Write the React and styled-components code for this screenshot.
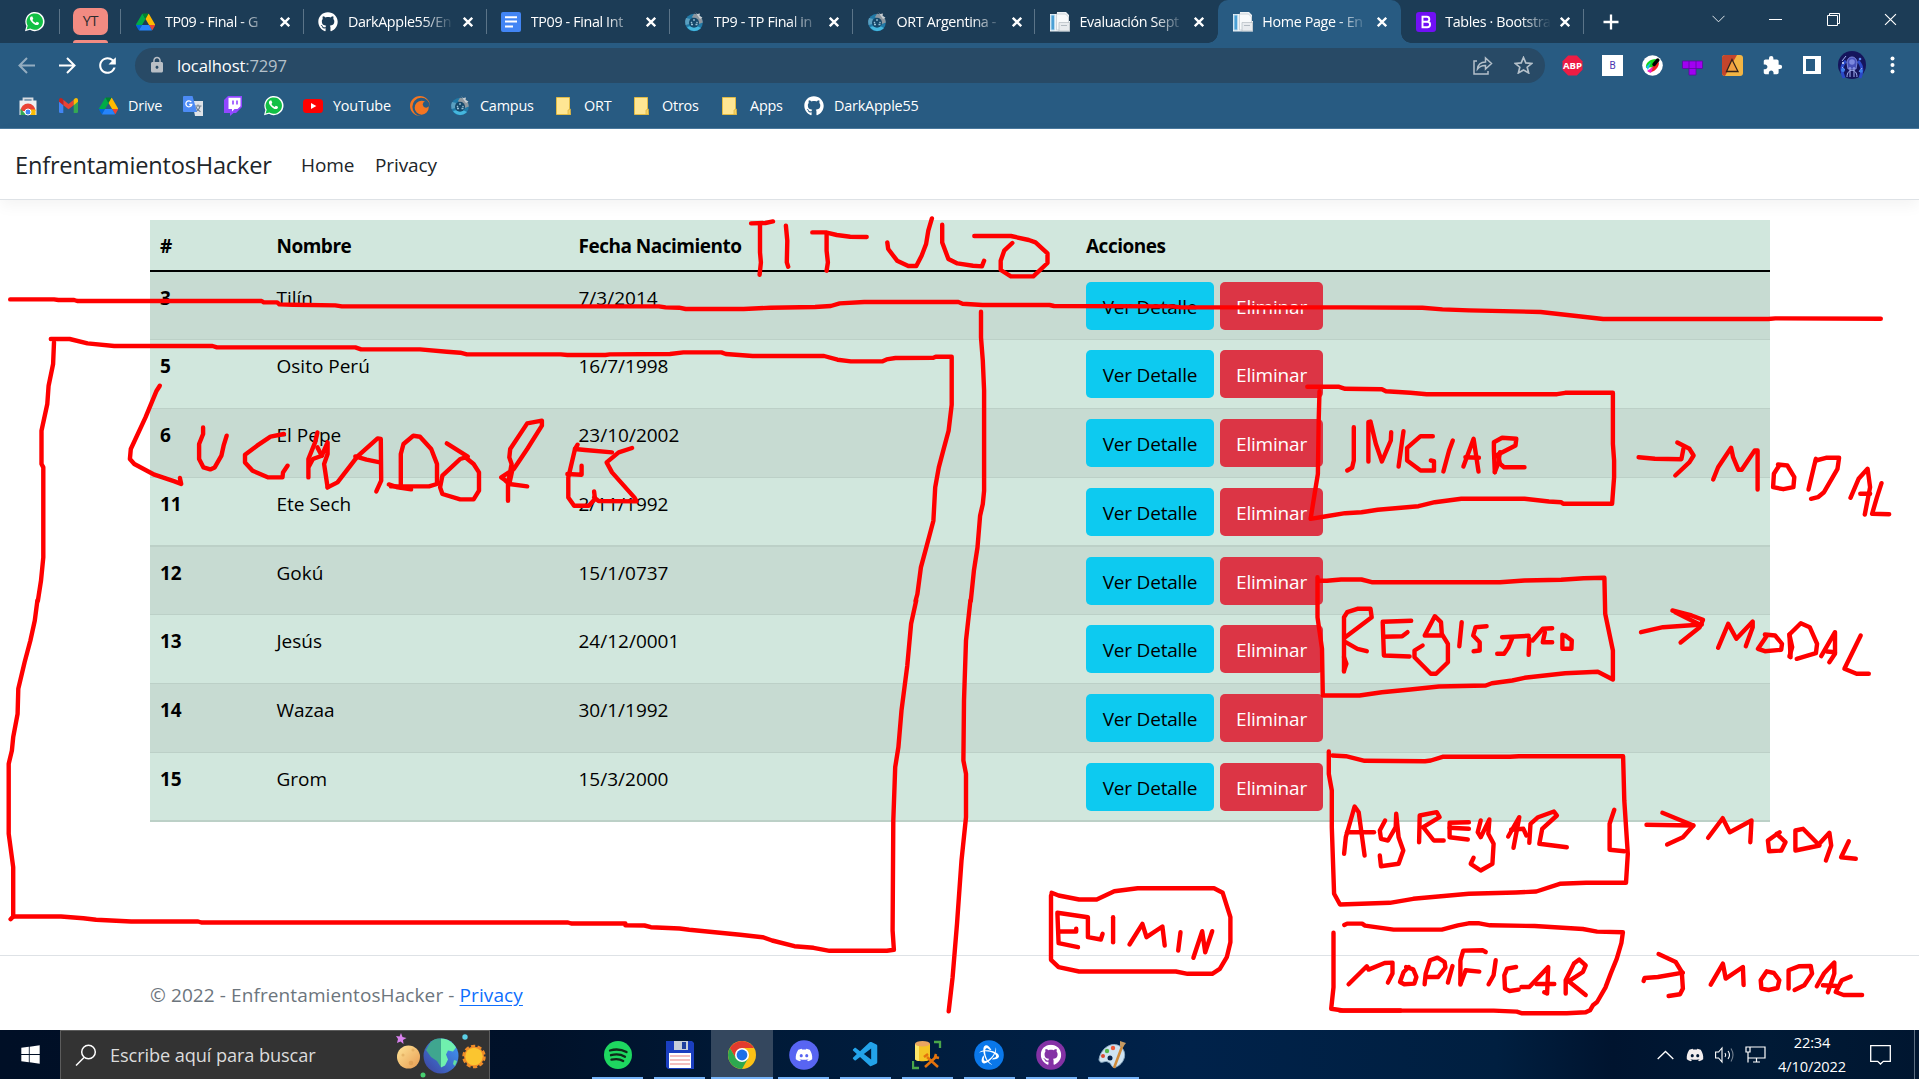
import React from 'react';
import styled, { createGlobalStyle } from 'styled-components';
import { FaGithub, FaDiscord, FaWindows } from 'react-icons/fa';
import { SiCrunchyroll, SiBattledotnet } from 'react-icons/si';
import { VscVscode } from 'react-icons/vsc';
import { MdExtension, MdRefresh, MdLock } from 'react-icons/md';

const Global = createGlobalStyle`
  * { box-sizing: border-box; }
  body { margin: 0; overflow: hidden; font-family: "Open Sans", "Noto Sans", sans-serif; }
  svg { display: block; flex: none; }
`;

const Screen = styled.div`
  position: relative;
  width: 1919px;
  height: 1079px;
  display: flex;
  flex-direction: column;
  background: #fff;
  overflow: hidden;
`;

/* ---------- browser ---------- */
const TabStrip = styled.div`
  height: 43px;
  display: flex;
  background: #1c3c56;
  color: #fff;
`;
const PinnedTab = styled.div`
  width: 60px;
  padding-left: 24px;
  display: flex;
  align-items: center;
  position: relative;
  &::after {
    content: '';
    position: absolute;
    right: 0;
    top: 9px;
    width: 1px;
    height: 25px;
    background: #5b7488;
  }
`;
const GroupTab = styled(PinnedTab)`
  width: 61px;
  padding: 8px 0 0 13px;
  flex-direction: column;
  align-items: flex-start;
  justify-content: space-between;
`;
const GroupChip = styled.span`
  width: 35px;
  height: 27px;
  border-radius: 7px;
  background: #f28b82;
  color: #2b2b2e;
  font-size: 14.5px;
  line-height: 26px;
  letter-spacing: -0.4px;
  text-align: center;
`;
const GroupLine = styled.span`
  width: 35px;
  height: 3px;
  border-radius: 3px 3px 0 0;
  background: #f28b82;
`;
const Tab = styled.div`
  position: relative;
  width: 182.9px;
  padding-left: 14.5px;
  display: flex;
  align-items: center;
  background: ${(p) => (p.$active ? '#285b82' : 'transparent')};
  border-radius: 10px 10px 0 0;
  &::after {
    content: '';
    display: ${(p) => (p.$active || p.$beforeActive ? 'none' : 'block')};
    position: absolute;
    right: 0;
    top: 9px;
    width: 1px;
    height: 25px;
    background: #5b7488;
  }
`;
const TabFoot = styled.span`
  position: absolute;
  bottom: 0;
  ${(p) => (p.$right ? 'left: 100%;' : 'right: 100%;')}
  width: 10px;
  height: 10px;
  background: radial-gradient(circle at ${(p) => (p.$right ? '100%' : '0')} 0, transparent 9.5px, #285b82 10px);
`;
const IconSlot = styled.span`
  width: ${(p) => p.$w || 20}px;
  flex: none;
  display: flex;
  justify-content: center;
`;
const TabLabel = styled.span`
  width: 107px;
  margin-left: 9.5px;
  white-space: nowrap;
  font-size: 14.3px;
  line-height: 22px;
  letter-spacing: -0.35px;
  mask-image: linear-gradient(90deg, #000 75px, transparent 106px);
`;
const TabClose = styled.span`
  width: 26px;
  display: flex;
  justify-content: center;
`;
const NewTab = styled.span`
  width: 54px;
  display: flex;
  align-items: center;
  justify-content: center;
`;
const WindowControls = styled.div`
  margin-left: auto;
  height: 38px;
  display: flex;
  align-items: center;
`;
const WindowButton = styled.span`
  width: 57.3px;
  display: flex;
  justify-content: center;
`;

const Toolbar = styled.div`
  height: 44px;
  padding: 0 6px 0 7px;
  display: flex;
  align-items: center;
  background: #285b82;
`;
const ToolButton = styled.span`
  width: 40px;
  height: 40px;
  flex: none;
  display: flex;
  align-items: center;
  justify-content: center;
  opacity: ${(p) => (p.$dim ? 0.5 : 1)};
`;
const Omnibox = styled.div`
  height: 35px;
  width: 1410px;
  margin: 0 7px 0 8px;
  padding: 0 2px 0 13px;
  border-radius: 18px;
  display: flex;
  align-items: center;
  background: #284a66;
  color: #b4c0ca;
`;
const Url = styled.span`
  margin-left: 11px;
  flex: 1;
  font-size: 16.6px;
  letter-spacing: -0.15px;
  b { color: #fff; font-weight: 400; }
`;

const Bookmarks = styled.div`
  height: 42px;
  padding: 0 8px 4px;
  display: flex;
  align-items: center;
  background: #285b82;
  border-bottom: 1px solid #4b7a9f;
  color: #fff;
`;
const Bookmark = styled.span`
  height: 30px;
  padding: 0 10px;
  display: flex;
  align-items: center;
`;
const BookmarkLabel = styled.span`
  width: ${(p) => p.$w}px;
  margin-left: 10px;
  font-size: 14.4px;
  letter-spacing: -0.2px;
  white-space: nowrap;
`;

/* ---------- page ---------- */
const Page = styled.div`
  flex: 1;
  display: flex;
  flex-direction: column;
  background: #fff;
  color: #212529;
  font-size: 19px;
`;
const Navbar = styled.header`
  height: 71px;
  padding: 1px 15px 0;
  display: flex;
  align-items: center;
  border-bottom: 1px solid #dee2e6;
  box-shadow: 0 5px 15px rgba(0, 0, 0, 0.05);
  white-space: nowrap;
`;
const Brand = styled.span`
  width: 286px;
  font-size: 23.6px;
  letter-spacing: -0.2px;
`;
const NavLink = styled.span`
  width: 74px;
  letter-spacing: -0.1px;
`;
const Main = styled.main`
  flex: 1;
  padding: 20px 149px 0 150px;
`;
const GridRow = styled.div`
  display: grid;
  grid-template-columns: 116.5px 302px 507.5px 1fr;
  width: 1620px;
  color: #000;
`;
const HeadRow = styled(GridRow)`
  height: 52px;
  background: #d1e7dd;
  border-bottom: 2px solid #000;
  font-weight: 700;
  letter-spacing: -0.5px;
`;
const BodyRow = styled(GridRow)`
  height: ${(p) => p.$h}px;
  background: ${(p) => (p.$striped ? '#c7dbd2' : '#d1e7dd')};
  border-bottom: ${(p) => p.$line}px solid #bcd0c7;
`;
const Cell = styled.div`
  padding: 11px 10px 0;
  line-height: 30px;
  letter-spacing: ${(p) => (p.$head ? -0.5 : 0)}px;
  font-weight: ${(p) => (p.$strong ? 700 : 'inherit')};
  white-space: nowrap;
`;
const Actions = styled(Cell)`
  padding-top: 10px;
  display: flex;
  gap: 6px;
`;
const Button = styled.span`
  width: ${(p) => p.$w}px;
  height: 47.5px;
  border-radius: 5px;
  text-align: center;
  line-height: 50px;
  letter-spacing: -0.2px;
  background: ${(p) => (p.$danger ? '#dc3545' : '#0dcaf0')};
  color: ${(p) => (p.$danger ? '#fff' : '#000')};
`;
const Footer = styled.footer`
  height: 75px;
  padding-left: 150px;
  border-top: 1px solid #dee2e6;
  line-height: 78px;
  color: #6c757d;
  letter-spacing: 0.1px;
  u { color: #0d6efd; text-underline-offset: 3px; }
`;

/* ---------- taskbar ---------- */
const Taskbar = styled.div`
  height: 49px;
  display: flex;
  background: linear-gradient(90deg, #000f26 0%, #001129 28%, #001a38 40%, #00224a 62%, #001f40 78%, #00142f 84%, #001a36 92%, #001630 100%);
  color: #fff;
`;
const Start = styled.span`
  width: 60px;
  display: flex;
  align-items: center;
  justify-content: center;
`;
const Search = styled.div`
  width: 430px;
  padding: 0 3px 0 14px;
  display: flex;
  align-items: center;
  background: #333;
  border: 1px solid #5c5c5c;
  border-bottom: 0;
  color: #dcdcdc;
  font-size: 18.2px;
`;
const SearchText = styled.span`
  margin-left: 13px;
  flex: 1;
  letter-spacing: -0.1px;
`;
const Apps = styled.div`
  margin-left: 97px;
  display: flex;
`;
const AppSlot = styled.span`
  width: 61.9px;
  display: flex;
  flex-direction: column;
  align-items: center;
  justify-content: space-between;
  padding-top: 10px;
  background: ${(p) => (p.$active ? '#34475e' : 'transparent')};
  &::after {
    content: '';
    width: ${(p) => (p.$active ? 62 : 51)}px;
    height: 2px;
    background: #76b3f8;
  }
`;
const Tray = styled.div`
  margin-left: auto;
  display: flex;
  align-items: center;
`;
const TrayItem = styled.span`
  width: 30px;
  display: flex;
  justify-content: center;
`;
const Clock = styled.span`
  width: 84px;
  text-align: center;
  font-size: 14.6px;
  line-height: 23.5px;
  letter-spacing: -0.1px;
`;
const Notify = styled.span`
  width: 52px;
  display: flex;
  justify-content: center;
`;
const DesktopEdge = styled.span`
  width: 5px;
  height: 49px;
  margin-left: 8px;
  border-left: 1px solid #5d6f82;
`;

const InkLayer = styled.svg`
  position: absolute;
  inset: 0;
  pointer-events: none;
`;

/* ---------- icons ---------- */
const Whatsapp = () => (
  <svg width="21" height="21" viewBox="0 0 21 21">
    <path d="M1 20.2 2.4 15A9.6 9.6 0 1 1 6 18.8Z" fill="#fff" />
    <path d="M2.6 18.6 3.7 14.8A8.2 8.2 0 1 1 6.3 17.5Z" fill="#12c045" />
    <path d="M7 5.4c-1.6.9-1.5 3 .7 5.500s5 4 6.700 2.600c.9-.8.6-1.700.1-2l-1.700-.8-1.200 1.200C10 11.300 8.900 10.200 8.400 9l.9-1.200-.9-2.200Z" fill="#fff" />
  </svg>
);
const Drive = () => (
  <svg width="19" height="18" viewBox="0 0 87 78">
    <path d="m6.600 67 3.900 6.600c.8 1.400 2 2.500 3.300 3.300L27.500 53H0c0 1.600.4 3.100 1.200 4.500z" fill="#0066da" />
    <path d="M43.700 25 29.900 1.200c-1.300.8-2.500 1.900-3.300 3.300l-25.400 44A9 9 0 0 0 0 53h27.500z" fill="#00ac47" />
    <path d="M73.500 76.800c1.400-.8 2.500-1.900 3.300-3.300l9.200-16c.9-1.400 1.200-3 1.200-4.500H59.800l5.900 11.500z" fill="#ea4335" />
    <path d="M43.700 25 57.400 1.200C56.100.4 54.500 0 52.900 0H34.400c-1.600 0-3.200.5-4.500 1.200z" fill="#00832d" />
    <path d="M59.800 53H27.500L13.700 76.800c1.400.8 2.900 1.200 4.500 1.200h50.800c1.600 0 3.200-.5 4.500-1.200z" fill="#2684fc" />
    <path d="m73.400 26.500-12.700-22c-.8-1.400-1.900-2.500-3.300-3.300L43.700 25l16.100 28h27.400c0-1.600-.4-3.100-1.200-4.500z" fill="#ffba00" />
  </svg>
);
const Docs = () => (
  <svg width="20" height="20" viewBox="0 0 20 20">
    <rect width="20" height="20" rx="2" fill="#4285f4" />
    <path d="M4 5.300h12M4 9.500h12M4 14.500h8" stroke="#fff" strokeWidth="2" />
  </svg>
);
const Campus = () => (
  <svg width="20" height="20" viewBox="0 0 20 20">
    <circle cx="10" cy="10.500" r="8.800" fill="#2179a6" />
    <path d="M10 1.700a8.800 8.800 0 0 1 8.800 8.800l-4 1.500L8 5Z" fill="#8d979f" />
    <path d="M11 0l2 2 3-.5-.5 2.500 3 1.500-2.500 1.500Z" fill="#c9ced2" />
    <path d="M3 15a8.800 8.800 0 0 0 14 1l-4-2-6 0Z" fill="#45b7de" />
    <path d="M2 6a9 9 0 0 0-.5 7l4-1 1-5Z" fill="#5a9fc0" />
    <circle cx="10" cy="10.800" r="5" fill="#16486a" />
    <path d="M10 7v2M7 12.500h2M11.500 12.500h2M8 10l-1 1M12.500 10l1 1" stroke="#9bc4d8" strokeWidth="1.300" />
  </svg>
);
const Pages = () => (
  <svg width="20" height="20" viewBox="0 0 20 20">
    <path d="M0 2h7V0h9l3 3v6h1v10.500H0Z" fill="#eef2f5" />
    <path d="M1 3h3.500v15H1Z" fill="#4ba0d5" stroke="#b6d9ee" />
    <path d="M6.500 2h9l3 3v13h-12Z" fill="#f8fafb" stroke="#c5cdd3" strokeWidth=".8" />
    <path d="M9 10.500h10.500v8.500H9Z" fill="#e8ebee" stroke="#b3bbc2" strokeWidth=".7" />
    <path d="M11 13.500h6" stroke="#b3bbc2" />
  </svg>
);
const BootstrapIcon = () => (
  <svg width="20" height="20" viewBox="0 0 20 20">
    <rect width="20" height="20" rx="3" fill="#7110f5" />
    <path d="M6.500 4.800h4.300a2.500 2.500 0 0 1 0 5H6.500Zm0 5h4.800a2.700 2.700 0 0 1 0 5.500H6.500Z" fill="none" stroke="#fff" strokeWidth="1.900" />
  </svg>
);
const Cross = ({ size = 10, weight = 2.300 }) => (
  <svg width={size} height={size} viewBox="0 0 10 10">
    <path d="m.8.8 8.400 8.400M9.200.8.8 9.200" stroke="#fff" strokeWidth={weight} />
  </svg>
);
const Arrow = ({ flip }) => (
  <svg width="18" height="17" viewBox="0 0 18 17" transform={flip ? 'scale(-1 1)' : undefined}>
    <path d="M1 8.500h15M9 1l7.500 7.500L9 16" fill="none" stroke="#fff" strokeWidth="2" />
  </svg>
);
const Share = () => (
  <svg width="20" height="19" viewBox="0 0 20 19">
    <path d="M4 5H1v13h14v-3M4.500 13c.5-4.500 3-7 8-7V2l6 5.500-6 5.500V9.500c-4-.2-6 1-8 3.500Z" fill="none" stroke="#b4c0ca" strokeWidth="1.500" />
  </svg>
);
const Star = () => (
  <svg width="19" height="18" viewBox="0 0 19 18">
    <path d="m9.500 1.500 2.300 5.400 5.900.5-4.500 3.800 1.400 5.700-5.100-3-5.100 3 1.400-5.700L1.300 7.400l5.900-.5Z" fill="none" stroke="#b4c0ca" strokeWidth="1.700" />
  </svg>
);
const Abp = () => (
  <svg width="21" height="21" viewBox="0 0 21 21">
    <path d="M6.200.5h8.600l5.700 5.700v8.600l-5.700 5.700H6.200L.5 14.800V6.200Z" fill="#ee1c44" />
    <text x="10.500" y="14" fontSize="9.600" fontWeight="700" fill="#fff" textAnchor="middle" fontFamily="Open Sans" textLength="19" lengthAdjust="spacingAndGlyphs">ABP</text>
  </svg>
);
const BExt = () => (
  <svg width="21" height="21" viewBox="0 0 21 21">
    <rect width="21" height="21" fill="#fff" />
    <text x="10.500" y="14" fontSize="10" fill="#4a35b0" textAnchor="middle" fontFamily="Roboto">B</text>
  </svg>
);
const ColorExt = () => (
  <svg width="21" height="21" viewBox="0 0 21 21">
    <circle cx="10.500" cy="10.500" r="10.300" fill="#fff" />
    <path d="M4 13C3 8 8 4 14 4l-3 8Z" fill="#12d61b" />
    <path d="m4 12 5-5-3 8Z" fill="#19bff0" />
    <path d="M6 17c6 1 11-4 11-10l-7 5Z" fill="#f01e1e" />
    <path d="m5 16 6-4-2 6Z" fill="#ef1bd0" />
    <path d="m12 9.500 3.800-4.500" stroke="#000" strokeWidth="3.500" strokeLinecap="round" />
  </svg>
);
const Tetris = () => (
  <svg width="21" height="21" viewBox="0 0 21 21">
    <path d="M.5 6h20v7.500H14V20H7v-6.500H.5Z" fill="#a100f2" />
    <path d="M7 6v7.500h7V6M.5 6h20v7.500H14V20H7v-6.500H.5Z" fill="none" stroke="#5a0a9c" strokeWidth=".8" />
  </svg>
);
const Triangle = () => (
  <svg width="21" height="21" viewBox="0 0 21 21">
    <rect width="21" height="21" rx="3" fill="#f2b544" />
    <path d="M0 3a3 3 0 0 1 3-3h12L3 21a3 3 0 0 1-3-3Z" fill="#c4452c" />
    <path d="m10 4.500 6 12H4.500Z" fill="#f0a040" stroke="#33221b" strokeWidth="1.300" />
  </svg>
);
const Avatar = () => (
  <svg width="28" height="28" viewBox="0 0 28 28">
    <circle cx="14" cy="14" r="14" fill="#15155c" />
    <path d="M6 27C3 20 3 14 8 10M22 27c3-7 2-13-2-17" stroke="#2a49c8" strokeWidth="3" fill="none" />
    <path d="M9 12c0-8 10-8 10 0l-1 6h-8Z" fill="#4650b8" stroke="#8f9bec" strokeWidth=".8" />
    <circle cx="14" cy="11" r="2.800" fill="#7c88de" />
    <path d="M9 26c0-9 10-9 10 0M12 16v10M16 16v10M4 16l3 3M24 17l-3 4M8 5l-4 5" stroke="#a6b4f4" strokeWidth="1" fill="none" />
    <circle cx="5" cy="19" r="2" fill="#3f7de8" /><circle cx="5" cy="12" r="1" fill="#d8e0ff" />
    <circle cx="22" cy="8" r="1.300" fill="#5c8df0" /><circle cx="23" cy="20" r="1.800" fill="#3f7de8" />
  </svg>
);
const Dots = () => (
  <svg width="5" height="18" viewBox="0 0 5 18" fill="#fff">
    <circle cx="2.500" cy="2.500" r="2" /><circle cx="2.500" cy="9" r="2" /><circle cx="2.500" cy="15.500" r="2" />
  </svg>
);
const SidePanel = () => (
  <svg width="18" height="18" viewBox="0 0 18 18"><path d="M0 0h18v18H0ZM3 3v12h9V3Z" fill="#fff" fillRule="evenodd" /></svg>
);
const Store = () => (
  <svg width="20" height="20" viewBox="0 0 20 20">
    <path d="M5.500 5V2.500h9V5" fill="none" stroke="#d8dce0" strokeWidth="1.800" />
    <path d="M1.500 4.500h17V19h-17Z" fill="#eceff1" />
    <path d="M2.500 15a7.500 7.500 0 0 1 15 0Z" fill="#ea4335" />
    <path d="M2.500 12.500 8 19H2.500Z" fill="#34a853" />
    <path d="M17.500 13.500V19H9l3-5.500Z" fill="#fbbc05" />
    <circle cx="10" cy="16" r="3" fill="#4285f4" stroke="#fff" />
  </svg>
);
const Gmail = () => (
  <svg width="19" height="15" viewBox="0 0 19 15">
    <path d="M0 2h4.300v13H1.300A1.300 1.300 0 0 1 0 13.700Z" fill="#4285f4" />
    <path d="M14.700 2H19v11.700a1.300 1.300 0 0 1-1.300 1.300h-3Z" fill="#34a853" />
    <path d="M4.300 1.800 9.500 6l5.200-4.200v5.400L9.500 11.300 4.300 7.200Z" fill="#ea4335" />
    <path d="M0 2.200C0 .3 2-.6 3.500.8l.8 1v5.400L0 3.800Z" fill="#c5221f" />
    <path d="M19 2.200c0-1.900-2-2.800-3.500-1.400l-.8 1v5.400L19 3.800Z" fill="#fbbc04" />
  </svg>
);
const Translate = () => (
  <svg width="20" height="20" viewBox="0 0 20 20">
    <path d="M9 5h11v15h-8Z" fill="#dfe3e8" />
    <path d="M11.500 10h7M15 8.500V10M17 10c-.5 3-2 4.500-4 5.500M13 11c.8 2.500 2.500 4 4.500 4.800" fill="none" stroke="#6f7f8e" strokeWidth="1.100" />
    <path d="M1 0h8.500L14 16H1a1 1 0 0 1-1-1V1a1 1 0 0 1 1-1Z" fill="#4c8bf5" />
    <path d="M8.300 6A3 3 0 1 0 8.800 8.500H6.200" fill="none" stroke="#fff" strokeWidth="1.300" />
  </svg>
);
const TwitchIcon = () => (
  <svg width="18" height="20" viewBox="0 0 18 20">
    <path d="M4 0h14v11l-6 6H9.500L6 20v-3H0V4Z" fill="#9147ff" />
    <path d="M4.500 1.700h12v8.500L13.500 13h-3L8 15.500V13H4.500Z" fill="#fff" />
    <path d="M9 4.500v4M13 4.500v4" stroke="#9147ff" strokeWidth="1.600" />
  </svg>
);
const Youtube = () => (
  <svg width="20" height="14" viewBox="0 0 20 14"><rect width="20" height="14" rx="3.500" fill="#f00" /><path d="m8 4 5.300 3L8 10Z" fill="#fff" /></svg>
);
const Folder = () => (
  <svg width="20" height="20" viewBox="0 0 20 20">
    <path d="M2.500 1.500h13v14l1 3h-14Z" fill="#ffe693" stroke="#e2bb45" />
    <path d="M14 18.500v-4.500l2.500-1v5.500Z" fill="#f6d264" stroke="#dbb13c" strokeWidth=".7" />
  </svg>
);
const Planets = () => (
  <svg width="90" height="46" viewBox="0 0 90 46">
    <defs>
      <linearGradient id="moon" x1="0" y1="0" x2="1" y2="1"><stop offset="0" stopColor="#ffe597" /><stop offset="1" stopColor="#e79c52" /></linearGradient>
      <linearGradient id="sea" x1="0" y1="1" x2="1" y2="0"><stop offset="0" stopColor="#3d3f9c" /><stop offset="1" stopColor="#3f9dfb" /></linearGradient>
    </defs>
    <path d="m5 1 1.500 4 4 1-3.500 2 .5 4-3-2.500L1 11l1-4-2-3 3.500.5Z" fill="#d982ee" />
    <circle cx="12.500" cy="25" r="11.500" fill="url(#moon)" />
    <circle cx="7" cy="23" r="1.500" fill="#dca659" opacity=".6" /><circle cx="15" cy="31" r="2.300" fill="#d99a4e" opacity=".6" /><circle cx="17" cy="18" r="1.500" fill="#dca659" opacity=".6" />
    <circle cx="45" cy="24" r="17.500" fill="url(#sea)" />
    <path d="M34 11c3-4 7-5 11-4.500v29L41 29l-6-4-5-7Z" fill="#3fa68f" />
    <path d="M45 6.500c7 0 12 4 15 9l-3 4-5-1-2 4 2 5-3 6-4 2Z" fill="#70f0ae" />
    <path d="m58 28 3 1-2 5-2-2Z" fill="#62dfa0" />
    <circle cx="78" cy="24.500" r="10" fill="#ef8c28" stroke="#ef8c28" strokeWidth="3.500" strokeDasharray="4 2.280" />
    <circle cx="78" cy="24.500" r="8.700" fill="#fbc52f" />
    <circle cx="69" cy="5" r="2.700" fill="#5bcfe6" /><circle cx="27" cy="43" r="2.500" fill="#47cf70" />
  </svg>
);
const Disk = ({ color, children }) => (
  <svg width="30" height="30" viewBox="0 0 30 30"><circle cx="15" cy="15" r="14.800" fill={color} />{children}</svg>
);
const Spotify = () => (
  <svg width="28" height="30" viewBox="0 0 28 30">
    <circle cx="14" cy="15" r="14" fill="#1ed760" />
    <path d="M6 10.500c6-1.800 11.500-1.200 16.500 1.600M7 15.200c5-1.400 9.800-1 14 1.500M7.500 19.700c4.500-1.200 8.300-.8 11.700 1.300" fill="none" stroke="#10281a" strokeWidth="2.300" strokeLinecap="round" />
  </svg>
);
const Floppy = () => (
  <svg width="28" height="30" viewBox="0 0 28 30">
    <path d="M0 1h26l2 2v26H2l-2-2Z" fill="#1b3fc0" />
    <path d="M8 1h14v9H8Z" fill="#c8d0da" /><path d="M16 2h4v7h-4Z" fill="#20419f" />
    <path d="M3 13h22v15H3Z" fill="#fff" /><path d="M4 16h20M4 20h20M4 24h20" stroke="#efabab" strokeWidth="1.500" />
  </svg>
);
const Chrome = () => (
  <svg width="28" height="30" viewBox="-14 -15 28 30">
    <circle r="14" fill="#fbc116" />
    <path d="M0-7H12.120A14 14 0 0 0-12.120-7L-6 3.500Z" fill="#e33b2e" />
    <path d="M-12.120-7A14 14 0 0 0 0 14L6 3.500 0 5-6 3.500Z" fill="#2da94f" />
    <circle r="7" fill="#fff" /><circle r="5.400" fill="#1f70e8" />
  </svg>
);
const Sql = () => (
  <svg width="30" height="30" viewBox="0 0 30 30">
    <path d="M3 4v15c0 3 15 3 15 0V4Z" fill="#f4c524" /><path d="M3 4v15c0 1 3 2 4 2V4Z" fill="#fde66a" />
    <ellipse cx="10.500" cy="3.800" rx="7.500" ry="2.800" fill="#e9a561" />
    <path d="M22 2h6v6M1 21v7h6" fill="none" stroke="#4aa64a" strokeWidth="2.300" />
    <path d="m15 17 11 10M25 16 13 27M12 17l4-3M24 14l-1 3 4 1" fill="none" stroke="#e4730d" strokeWidth="2.500" />
  </svg>
);
const Paint = () => (
  <svg width="30" height="30" viewBox="0 0 30 30">
    <path d="M1 20C2 9 14 0 23 7c7 6 3 17-5 20-5 2-4-4-8-5-4-2-7 3-9-2Z" fill="#cfe3f1" stroke="#8faec6" />
    <circle cx="5" cy="16" r="2" fill="#d94b33" /><circle cx="9" cy="11" r="2.200" fill="#55b84a" /><circle cx="15" cy="8" r="2.200" fill="#ee5b3a" />
    <circle cx="12" cy="18" r="2.500" fill="#06224a" />
    <path d="m25 4-9 24" stroke="#d08b3a" strokeWidth="2.500" /><path d="m22 1 6 2-3 4-3-1Z" fill="#c49a63" />
  </svg>
);

/* ---------- data ---------- */
const tabs = [
  { icon: <Drive />, label: 'TP09 - Final - G' },
  { icon: <FaGithub size={20} />, label: 'DarkApple55/En' },
  { icon: <Docs />, label: 'TP09 - Final Int' },
  { icon: <Campus />, label: 'TP9 - TP Final in' },
  { icon: <Campus />, label: 'ORT Argentina -' },
  { icon: <Pages />, label: 'Evaluación Sept', beforeActive: true },
  { icon: <Pages />, label: 'Home Page - En', active: true },
  { icon: <BootstrapIcon />, label: 'Tables · Bootstra' },
];

const bookmarks = [
  { icon: <Store /> },
  { icon: <Gmail /> },
  { icon: <Drive />, label: 'Drive', w: 35 },
  { icon: <Translate /> },
  { icon: <TwitchIcon /> },
  { icon: <Whatsapp /> },
  { icon: <Youtube />, label: 'YouTube', w: 57 },
  { icon: <SiCrunchyroll size={20} color="#f47521" /> },
  { icon: <Campus />, label: 'Campus', w: 54 },
  { icon: <Folder />, label: 'ORT', w: 28 },
  { icon: <Folder />, label: 'Otros', w: 38 },
  { icon: <Folder />, label: 'Apps', w: 34 },
  { icon: <FaGithub size={20} />, label: 'DarkApple55', w: 90 },
];

const fighters = [
  [3, 'Tilín', '7/3/2014', 68, 1],
  [5, 'Osito Perú', '16/7/1998', 69, 1],
  [6, 'El Pepe', '23/10/2002', 69, 1],
  [11, 'Ete Sech', '2/11/1992', 69, 2],
  [12, 'Gokú', '15/1/0737', 68, 1],
  [13, 'Jesús', '24/12/0001', 69, 1],
  [14, 'Wazaa', '30/1/1992', 69, 1],
  [15, 'Grom', '15/3/2000', 69, 2],
];

const apps = [
  <Spotify />,
  <Floppy />,
  <Chrome />,
  <Disk color="#5865f2"><FaDiscord x="6" y="6" size={18} color="#fff" /></Disk>,
  <VscVscode size={30} color="#23a3ea" />,
  <Sql />,
  <Disk color="#0a78ea"><SiBattledotnet x="5" y="5" size={20} color="#fff" /></Disk>,
  <Disk color="#8432a5"><FaGithub x="4.500" y="4.500" size={21} color="#fff" /></Disk>,
  <Paint />,
];

/* Pen strokes, grouped by canvas zone; each zone has its own origin and grid density. */
const ink = [
  {
    x: 0.4, y: 200.7, dx: 2.24, dy: 3,
    strokes: [
      '22,296 120,296 130,298 165,298 172,301 585,301 590,305 620,305 625,311 655,312 750,314 765,317 1475,317 1490,320 1520,321 1535,325 1665,325 1725,321 1825,319 1860,316 1880,308 1935,304 2146,304 2155,309 2200,313 2350,313 2360,316 2625,317 2645,320 3015,320 3185,321 3230,326 3290,329 3450,334 3590,355 3960,355 3976,353 4212,354',
      '113,415 155,415 195,428 255,436 475,436 485,440 795,440 808,446 940,446 1000,453 1030,456 1045,461 1255,461 1270,463 1355,463 1365,461 1500,460 1530,455 1615,455 1625,460 1685,466 1845,466 1875,477 1905,482 1975,482 1985,476 2005,472 2090,471 2095,468 2131,468 2131,612 2124,690 2114,740 2102,800 2094,860 2090,960 2074,1040 2062,1100 2054,1180 2050,1200',
      '120,425 118,490 108,555 105,610 92,690 92,790 96,800 96,1070 91,1140 84,1200',
      '357,555 350,570 325,650 292,745 290,775 300,790 345,822 390,842 405,850 402,832',
      '454,680 454,700 445,730 445,775 455,800 470,806 480,800 495,765 500,735 507,705',
      '635,700 605,708 575,735 548,762 548,785 565,810 600,830 632,830 633,815 643,795',
      '710,695 705,725 690,775 690,830', '692,795 700,775 720,765 733,725 733,760 725,790 733,860', '720,765 710,740', '733,860 755,845 800,767 845,713 852,715 853,840 842,872',
      '795,767 820,777 850,785',
      '897,860 897,760 903,730 925,705 940,708 965,745 978,790 978,850 960,857 875,857', '870,851 890,860 920,866',
      '1000,728 1047,768 1030,775 990,825 985,860 990,880 1030,896 1060,896 1072,870 1072,815 1060,790 1040,768',
      '1137,900 1137,850 1145,790 1140,770 1142,745 1180,668 1213,660 1213,675 1180,745 1150,805 1122,830 1130,838 1140,850 1180,857', '1148,800 1140,850',
      '1293,732 1287,745 1272,830 1272,890 1285,915 1318,915 1332,895 1330,872', '1287,745 1310,748 1370,755', '1270,820 1302,822 1302,795',
      '1415,742 1385,755 1358,785 1370,815 1420,890 1425,902 1340,901 1330,890',
    ],
  },
  {
    x: 640.4, y: 200.7, dx: 2.24, dy: 3,
    strokes: [
      '248,68 280,67 297,62', '268,68 268,155 270,185 267,222', '326,75 329,120 328,185 331,198',
      '385,95 415,95 440,103 470,108 507,109', '417,97 417,150 420,185 417,210',
      '553,125 555,145 575,180 600,196 618,196 630,165 640,130 645,90 653,53',
      '676,72 676,125 690,175 710,188 745,195 765,197 770,180',
      '748,106 830,106 870,118 885,125 912,158 912,187 880,227 830,227 807,208 807,180 815,150 833,127',
      '763,333 763,410 767,480 770,570 770,870 767,910 761,945 755,1040 747,1110 740,1200',
    ],
  },
  {
    x: 0.4, y: 600.5, dx: 1.568, dy: 3,
    strokes: [
      '1436,0 1428,70 1422,195 1413,330 1408,440 1403,500 1402,560 1400,660 1399,990 1401,1048 1390,1051 1300,1051 1275,1042 1245,1037 1210,1020 1195,1010 1160,1003 1080,988 1065,984 1020,980 1010,975 980,974 980,969 895,969 890,966 315,966 310,963 205,963 150,958 130,953 95,948 20,948 16,956',
      '58,0 54,60 47,120 38,185 28,265 27,340 20,410 18,450 13,490 13,700 20,800 20,948',
      '1521,0 1514,120 1511,300 1510,480 1514,520 1514,650 1507,780 1500,970 1493,1130 1487,1232',
    ],
  },
  {
    x: 1280, y: 360.5, dx: 2.454, dy: 3,
    strokes: [
      '67,79 145,79 160,85 250,86 260,92 320,97 360,101 680,101 700,97 817,97 817,250 820,300 820,350 815,430 695,430 690,425 660,423 600,415 445,415 380,425 340,437 240,448 200,455 160,458 110,468 75,475 85,400 93,340 95,180 97,92',
      '181,200 181,300 177,322 165,330', '217,303 217,185 222,183 235,250 250,303 272,240 273,215', '303,212 300,240 291,318',
      '375,227 345,227 312,262 312,300 345,330 378,330 378,302 370,300', '424,240 415,270 401,333',
      '450,318 475,235 487,333', '455,290 488,292', '527,335 525,270 525,245 545,232 580,235 578,255 535,282 540,310 550,320 600,320', '527,335 535,310 540,275',
      '880,290 920,295 985,296 990,265', '975,246 1005,265 1015,285 1005,305 970,345',
      '1063,357 1075,320 1107,262 1112,290 1125,328 1133,328 1165,270 1172,270 1172,387',
      '1225,315 1212,340 1210,380 1235,386 1260,380 1262,350 1245,315 1222,312',
      '1315,295 1310,320 1297,387', '1315,300 1340,292 1372,292 1368,325 1335,395 1320,410 1303,415',
      '1400,412 1420,355 1442,325 1448,380 1435,462', '1424,400 1448,400', '1476,368 1465,410 1453,460 1495,461',
      '92,650 92,770 103,865 105,1005 195,1005 250,995 320,987 390,978 505,975 520,968 570,960 600,952 700,938 780,934 817,957 817,870 798,760 796,652 745,653 690,658 600,660 540,665 225,665 200,657 150,657 115,661 95,661',
      '157,933 157,770 165,755 190,745 222,745 225,770 160,830', '161,845 190,865 213,872', '157,890 163,910 157,930',
      '322,781 252,784 255,885 318,888', '255,829 300,827 313,815',
      '395,825 355,825 380,767 395,785 397,820 412,850 412,905 383,940 370,940 330,890 330,870 350,855',
      '446,785 440,857', '507,797 480,800 474,825 490,845 490,870 475,872',
      '545,830 610,826', '570,832 560,862 550,880 533,880', '610,883 612,835', '668,803 645,805 620,840', '668,845 645,845 650,815', '693,823 693,865 715,865 716,840 700,825',
      '886,815 940,800 1035,792', '963,750 1010,765 1038,778 1030,800 983,846', '970,755 1030,792',
      '1075,862 1100,790 1120,835 1160,783 1160,800 1143,857',
      '1195,825 1173,865 1190,872 1230,868 1232,850 1215,825 1190,822',
      '1253,890 1250,822 1278,788 1300,800 1318,850 1315,878 1268,895', '1250,822 1257,860 1250,888',
      '1328,887 1362,815 1362,880 1348,905', '1342,873 1362,875', '1425,825 1405,875 1385,925 1415,940 1445,940',
    ],
  },
  {
    x: 1000, y: 720.5, dx: 1.706, dy: 3,
    strokes: [
      '561,93 561,160 566,210 566,320 570,520 580,552 665,547 705,535 800,520 880,516 915,513 955,490 1000,487 1068,487 1071,400 1065,240 1063,107 885,107 870,109 755,109 735,120 725,122 622,121 590,107 567,105',
      '587,400 590,350 605,258 612,275 622,405', '592,335 638,335',
      '657,300 648,330 650,355 662,360 675,320 676,280 680,350 688,390 680,430 650,437 648,405',
      '715,365 716,285 745,275 750,290 722,320 740,360 757,360', '800,305 767,307 767,350 798,357', '767,322 800,325',
      '820,300 815,335 820,350 835,297 833,340 842,370 840,430 820,450 803,430 808,412',
      '867,348 886,290 876,382', '872,328 893,325 898,345', '903,367 905,310 918,290 945,273 950,285 925,325 920,370 967,380',
      '1048,268 1040,310 1040,388 1065,392', '1103,313 1183,315', '1130,277 1183,315 1165,350 1138,372',
      '1208,352 1233,293 1245,335 1282,300 1280,365', '1330,335 1310,360 1312,392 1333,390 1340,365 1325,340',
      '1357,387 1357,330 1370,325 1398,375 1357,390', '1395,375 1415,337 1418,375 1409,420', '1448,362 1435,410 1460,415',
      '88,517 100,525 135,537 165,537 195,512 235,503 365,503 380,517 393,590 393,665 387,710 375,745 362,760 320,760 300,753 135,753 100,740 87,718 87,525',
      '133,680 100,668 98,577 150,590 150,650 172,657 175,640', '100,633 130,633 130,625', '193,590 193,665',
      '221,672 243,610 250,650 277,618 281,675', '308,635 304,690', '330,712 345,632 350,695 362,632',
      '569,637 569,800 565,865 585,870 683,870',
    ],
  },
  {
    x: 1340, y: 850.3, dx: 2.8, dy: 3,
    strokes: [
      '12,224 20,220 62,220 70,226 150,238 285,238 330,225 360,219 390,219 420,225 545,227 680,236 720,244 792,246 788,278 775,325 758,370 743,412 720,455 708,465 700,480 688,486 635,489 510,489 495,484 430,481 0,481',
      '24,402 75,348 80,358 125,338 147,337 147,370 134,397', '193,350 178,365 168,395 180,402 208,400 214,380 205,357 185,350',
      '237,402 240,370 252,330 273,322 293,335 295,352 275,380 245,380', '315,347 302,397', '337,403 337,330 345,301 400,300 408,305', '338,400 352,360 390,364',
      '436,330 430,375 416,402', '493,350 468,355 460,375 462,415 475,422 500,418', '508,410 530,410 583,350 580,430 572,426', '550,401 600,401',
      '632,430 632,390 655,340 670,328 688,345 680,365 640,393 688,434',
      '850,392 853,383 890,380 960,367', '892,311 940,335 957,365 960,415 952,432 920,437',
      '1038,403 1072,340 1080,385 1128,350 1130,404', '1195,363 1178,390 1180,415 1200,419 1225,413 1230,390 1215,368 1195,363',
      '1256,415 1256,360 1285,348 1318,347 1322,370 1300,405 1273,419', '1335,408 1355,370 1384,337 1384,370 1366,426', '1352,405 1390,407', '1430,379 1405,390 1388,425 1410,434 1462,434',
    ],
  },
];

const place = (zone, stroke) =>
  stroke
    .split(' ')
    .map((pt) => {
      const [px, py] = pt.split(',').map(Number);
      return `${(zone.x + px / zone.dx).toFixed(1)},${(zone.y + py / zone.dy).toFixed(1)}`;
    })
    .join(' ');

export default function App() {
  return (
    <Screen>
      <Global />
      <TabStrip>
        <PinnedTab><Whatsapp /></PinnedTab>
        <GroupTab><GroupChip>YT</GroupChip><GroupLine /></GroupTab>
        {tabs.map((t, i) => (
          <Tab key={i} $active={t.active} $beforeActive={t.beforeActive}>
            {t.active && <><TabFoot /><TabFoot $right /></>}
            <IconSlot>{t.icon}</IconSlot>
            <TabLabel>{t.label}</TabLabel>
            <TabClose><Cross /></TabClose>
          </Tab>
        ))}
        <NewTab><svg width="16" height="16" viewBox="0 0 16 16"><path d="M8 .5v15M.5 8h15" stroke="#fff" strokeWidth="2.300" /></svg></NewTab>
        <WindowControls>
          <WindowButton><svg width="13" height="8" viewBox="0 0 13 8"><path d="m.5.8 6 6 6-6" fill="none" stroke="#dfe6eb" /></svg></WindowButton>
          <WindowButton><svg width="13" height="3" viewBox="0 0 13 3"><path d="M0 1.500h13" stroke="#fff" /></svg></WindowButton>
          <WindowButton><svg width="13" height="13" viewBox="0 0 13 13"><path d="M.5 2.500h10v10H.5ZM2.500 2.500v-2h10v10h-2" fill="none" stroke="#fff" /></svg></WindowButton>
          <WindowButton><Cross size={13} weight={0.9} /></WindowButton>
        </WindowControls>
      </TabStrip>
      <Toolbar>
        <ToolButton $dim><Arrow flip /></ToolButton>
        <ToolButton><Arrow /></ToolButton>
        <ToolButton><MdRefresh size={25} color="#fff" /></ToolButton>
        <Omnibox>
          <MdLock size={18} color="#b9bfc6" />
          <Url><b>localhost</b>:7297</Url>
          <ToolButton><Share /></ToolButton>
          <ToolButton><Star /></ToolButton>
        </Omnibox>
        <ToolButton><Abp /></ToolButton>
        <ToolButton><BExt /></ToolButton>
        <ToolButton><ColorExt /></ToolButton>
        <ToolButton><Tetris /></ToolButton>
        <ToolButton><Triangle /></ToolButton>
        <ToolButton><MdExtension size={21} color="#fff" /></ToolButton>
        <ToolButton><SidePanel /></ToolButton>
        <ToolButton><Avatar /></ToolButton>
        <ToolButton><Dots /></ToolButton>
      </Toolbar>
      <Bookmarks>
        {bookmarks.map((b, i) => (
          <Bookmark key={i}>
            <IconSlot>{b.icon}</IconSlot>
            {b.label && <BookmarkLabel $w={b.w}>{b.label}</BookmarkLabel>}
          </Bookmark>
        ))}
      </Bookmarks>
      <Page>
        <Navbar>
          <Brand>EnfrentamientosHacker</Brand>
          <NavLink>Home</NavLink>
          <NavLink>Privacy</NavLink>
        </Navbar>
        <Main>
          <HeadRow>
            <Cell $head>#</Cell>
            <Cell $head>Nombre</Cell>
            <Cell $head>Fecha Nacimiento</Cell>
            <Cell $head>Acciones</Cell>
          </HeadRow>
          {fighters.map(([id, name, birth, h, line], i) => (
            <BodyRow key={id} $h={h} $line={line} $striped={i % 2 === 0}>
              <Cell $strong>{id}</Cell>
              <Cell>{name}</Cell>
              <Cell>{birth}</Cell>
              <Actions>
                <Button $w={128}>Ver Detalle</Button>
                <Button $w={103} $danger>Eliminar</Button>
              </Actions>
            </BodyRow>
          ))}
        </Main>
        <Footer>© 2022 - EnfrentamientosHacker - <u>Privacy</u></Footer>
      </Page>
      <Taskbar>
        <Start><FaWindows size={21} /></Start>
        <Search>
          <svg width="22" height="22" viewBox="0 0 22 22"><path d="M9 13.500 1 21.500" stroke="#fff" strokeWidth="1.500" /><circle cx="13.500" cy="8" r="6.800" fill="none" stroke="#fff" strokeWidth="1.500" /></svg>
          <SearchText>Escribe aquí para buscar</SearchText>
          <Planets />
        </Search>
        <Apps>
          {apps.map((icon, i) => <AppSlot key={i} $active={i === 2}>{icon}</AppSlot>)}
        </Apps>
        <Tray>
          <TrayItem><svg width="17" height="10" viewBox="0 0 17 10"><path d="m.7 9 7.800-7.500L16.300 9" fill="none" stroke="#fff" strokeWidth="1.300" /></svg></TrayItem>
          <TrayItem><FaDiscord size={18} color="#f3eeee" /></TrayItem>
          <TrayItem>
            <svg width="20" height="18" viewBox="0 0 20 18" fill="none" stroke="#fff" strokeWidth="1.100"><path d="M.6 6h3l3.400-4v14l-3.400-4h-3Z" /><path d="M10 7q1.500 2 0 4M13 5q3 4 0 8" /><path d="M16 2.500q4 6.500 0 13" opacity=".45" /></svg>
          </TrayItem>
          <TrayItem>
            <svg width="21" height="17" viewBox="0 0 21 17" fill="none" stroke="#fff" strokeWidth="1.200"><path d="M5 1h15v11H3.500M1 1h4v5H1ZM3 6v10.500M11.500 12v3.500M8 16h7" /></svg>
          </TrayItem>
          <Clock>22:34<br />4/10/2022</Clock>
          <Notify><svg width="21" height="20" viewBox="0 0 21 20"><path d="M.7.700h19.600v15.600h-7L10.500 19l-2.800-2.700h-7Z" fill="none" stroke="#fff" strokeWidth="1.300" /></svg></Notify>
          <DesktopEdge />
        </Tray>
      </Taskbar>
      <InkLayer width="1919" height="1079" viewBox="0 0 1919 1079" fill="none" stroke="#f00" strokeWidth="4.400" strokeLinecap="round" strokeLinejoin="round">
        {ink.map((zone, z) => zone.strokes.map((s, i) => <polyline key={`${z}-${i}`} points={place(zone, s)} />))}
      </InkLayer>
    </Screen>
  );
}
